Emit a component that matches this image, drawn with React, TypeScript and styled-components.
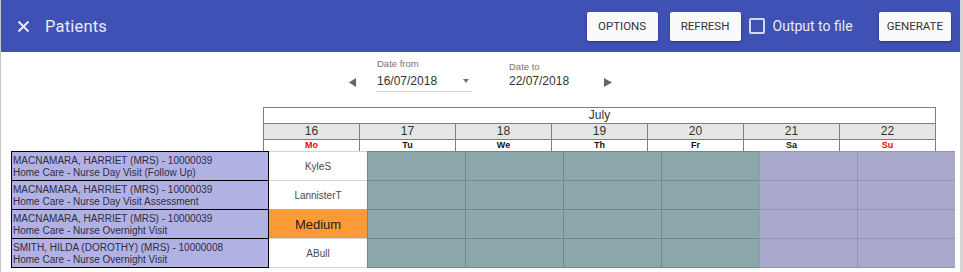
import styled, { createGlobalStyle } from 'styled-components'

const GlobalStyle = createGlobalStyle`
  html, body {
    margin: 0;
    padding: 0;
    background: #fff;
  }
  body {
    font-family: Roboto, "Liberation Sans", Arial, sans-serif;
  }
  * {
    box-sizing: border-box;
  }
`

const Frame = styled.div`
  width: 963px;
  height: 272px;
  overflow: hidden;
  background: #fff;
  border-left: 1px solid #c9c9c9;
  border-right: 3px solid #d5d5d5;
`

const Header = styled.header`
  height: 52px;
  display: flex;
  align-items: center;
  padding: 0 9px 0 16px;
  background: #3f51b5;
  color: #e8eaf6;
`

const Title = styled.h1`
  margin: 0 0 0 15px;
  font-size: 16.5px;
  font-weight: 400;
  letter-spacing: 0.2px;
`

const Spacer = styled.div`
  flex: 1;
`

const Button = styled.button<{ $gap?: number }>`
  height: 29px;
  min-width: 71px;
  padding: 0 8px;
  margin-right: ${p => p.$gap ?? 0}px;
  border: none;
  border-radius: 2px;
  background: #fafafa;
  box-shadow: 0 1px 3px rgba(0, 0, 0, 0.3);
  font-family: Roboto, sans-serif;
  font-size: 11.5px;
  font-weight: 400;
  color: #333;
  text-transform: uppercase;
`

const CheckBox = styled.span`
  width: 16px;
  height: 16px;
  margin-right: 8px;
  border: 2px solid #d3d7ef;
  border-radius: 2px;
`

const CheckLabel = styled.span`
  margin-right: 26px;
  font-size: 14px;
  color: #e8eaf6;
`

const DateBar = styled.div`
  height: 55px;
  display: flex;
  justify-content: center;
  font-family: "Liberation Sans", Arial, sans-serif;
`

const NavArrow = styled.svg<{ $side: 'left' | 'right' }>`
  margin-top: 26px;
  margin-right: ${p => (p.$side === 'left' ? 20 : 0)}px;
  flex: none;
`

const Field = styled.div<{ $top: number; $gap?: number }>`
  width: 96px;
  margin-left: ${p => p.$gap ?? 0}px;
  padding-top: ${p => p.$top}px;
  display: flex;
  flex-direction: column;
`

const FieldLabel = styled.span`
  padding-left: 1px;
  font-size: 9.5px;
  line-height: 12px;
  color: #757575;
`

const FieldValue = styled.div<{ $underline?: boolean }>`
  height: ${p => (p.$underline ? 19 : 16)}px;
  margin-top: ${p => (p.$underline ? 3 : 0)}px;
  padding: 0 3px 0 1px;
  display: flex;
  justify-content: space-between;
  font-size: 12px;
  line-height: 16px;
  color: #333;
  border-bottom: ${p => (p.$underline ? '1px solid #cfcfcf' : 'none')};
`

const Caret = styled.span`
  margin-top: 6px;
  width: 0;
  height: 0;
  border-left: 3.5px solid transparent;
  border-right: 3.5px solid transparent;
  border-top: 4px solid #757575;
`

const Schedule = styled.div`
  padding-left: 10px;
  font-family: "Liberation Sans", Arial, sans-serif;
`

const Calendar = styled.div`
  margin-left: 252px;
  width: 673px;
  display: grid;
  grid-template-columns: repeat(7, 96px);
  border-left: 1px solid #808080;
  border-top: 1px solid #808080;
`

const MonthCell = styled.div`
  grid-column: 1 / -1;
  height: 16px;
  line-height: 15px;
  text-align: center;
  font-size: 12px;
  color: #333;
  border-right: 1px solid #808080;
  border-bottom: 1px solid #808080;
`

const DayCell = styled.div`
  height: 16px;
  line-height: 15px;
  text-align: center;
  font-size: 12px;
  color: #333;
  background: #e5e5e5;
  border-right: 1px solid #808080;
  border-bottom: 1px solid #808080;
`

const WeekdayCell = styled.div<{ $red?: boolean }>`
  height: 11px;
  line-height: 11px;
  text-align: center;
  font-size: 9px;
  font-weight: bold;
  color: ${p => (p.$red ? '#ff0000' : '#111')};
  border-right: 1px solid #808080;
`

const Row = styled.div`
  display: grid;
  grid-template-columns: 258px repeat(7, 98px);
  height: 29px;

  &:last-child {
    height: 30px;
  }
  &:last-child > * {
    border-bottom-width: 1px;
  }
`

const PatientCell = styled.div`
  padding: 3px 2px 0 1px;
  background: #b1b1e4;
  border-style: solid;
  border-color: #000;
  border-width: 1px 1px 0 1px;
  font-size: 10px;
  line-height: 12px;
  color: #2e2e44;
  white-space: nowrap;
  overflow: hidden;
`

const AssigneeCell = styled.div<{ $medium?: boolean }>`
  display: flex;
  align-items: center;
  justify-content: center;
  background: ${p => (p.$medium ? '#fe9a36' : '#fff')};
  border-style: solid;
  border-color: ${p => (p.$medium ? '#e9a35c' : '#d2d2d2')};
  border-width: 1px 0 0 0;
  font-size: ${p => (p.$medium ? 13 : 10)}px;
  color: ${p => (p.$medium ? '#222' : '#4a4a4a')};
`

const SlotCell = styled.div<{ $weekend?: boolean }>`
  background: ${p => (p.$weekend ? '#a9a9cc' : '#8ba7a9')};
  border-style: solid;
  border-color: ${p => (p.$weekend ? '#9393b6' : '#71898b')};
  border-width: 1px 0 0 1px;
`

const days = [
  { n: 16, d: 'Mo', red: true },
  { n: 17, d: 'Tu' },
  { n: 18, d: 'We' },
  { n: 19, d: 'Th' },
  { n: 20, d: 'Fr' },
  { n: 21, d: 'Sa' },
  { n: 22, d: 'Su', red: true },
]

const rows = [
  { name: 'MACNAMARA, HARRIET (MRS) - 10000039', visit: 'Home Care - Nurse Day Visit (Follow Up)', who: 'KyleS' },
  { name: 'MACNAMARA, HARRIET (MRS) - 10000039', visit: 'Home Care - Nurse Day Visit Assessment', who: 'LannisterT' },
  { name: 'MACNAMARA, HARRIET (MRS) - 10000039', visit: 'Home Care - Nurse Overnight Visit', who: 'Medium', medium: true },
  { name: 'SMITH, HILDA (DOROTHY) (MRS) - 10000008', visit: 'Home Care - Nurse Overnight Visit', who: 'ABull' },
]

export default function App() {
  return (
    <>
      <GlobalStyle />
      <Frame>
        <Header>
          <svg width="13" height="13" viewBox="0 0 13 13">
            <path d="M1.5 1.5 L11.5 11.5 M11.5 1.5 L1.5 11.5" stroke="#e8eaf6" strokeWidth="2" />
          </svg>
          <Title>Patients</Title>
          <Spacer />
          <Button $gap={12}>Options</Button>
          <Button $gap={8}>Refresh</Button>
          <CheckBox />
          <CheckLabel>Output to file</CheckLabel>
          <Button>Generate</Button>
        </Header>

        <DateBar>
          <NavArrow $side="left" width="7" height="9" viewBox="0 0 7 9">
            <polygon points="7,0 7,9 0,4.5" fill="#666" />
          </NavArrow>
          <Field $top={6}>
            <FieldLabel>Date from</FieldLabel>
            <FieldValue $underline>
              16/07/2018
              <Caret />
            </FieldValue>
          </Field>
          <Field $top={9} $gap={36}>
            <FieldLabel>Date to</FieldLabel>
            <FieldValue>22/07/2018</FieldValue>
          </Field>
          <NavArrow $side="right" width="8" height="9" viewBox="0 0 8 9">
            <polygon points="0,0 0,9 8,4.5" fill="#666" />
          </NavArrow>
        </DateBar>

        <Schedule>
          <Calendar>
            <MonthCell>July</MonthCell>
            {days.map(d => (
              <DayCell key={d.n}>{d.n}</DayCell>
            ))}
            {days.map(d => (
              <WeekdayCell key={d.d} $red={d.red}>
                {d.d}
              </WeekdayCell>
            ))}
          </Calendar>
          <div>
            {rows.map((r, i) => (
              <Row key={i}>
                <PatientCell>
                  {r.name}
                  <br />
                  {r.visit}
                </PatientCell>
                <AssigneeCell $medium={r.medium}>{r.who}</AssigneeCell>
                {days.slice(1).map((d, j) => (
                  <SlotCell key={d.n} $weekend={j >= 4} />
                ))}
              </Row>
            ))}
          </div>
        </Schedule>
      </Frame>
    </>
  )
}
